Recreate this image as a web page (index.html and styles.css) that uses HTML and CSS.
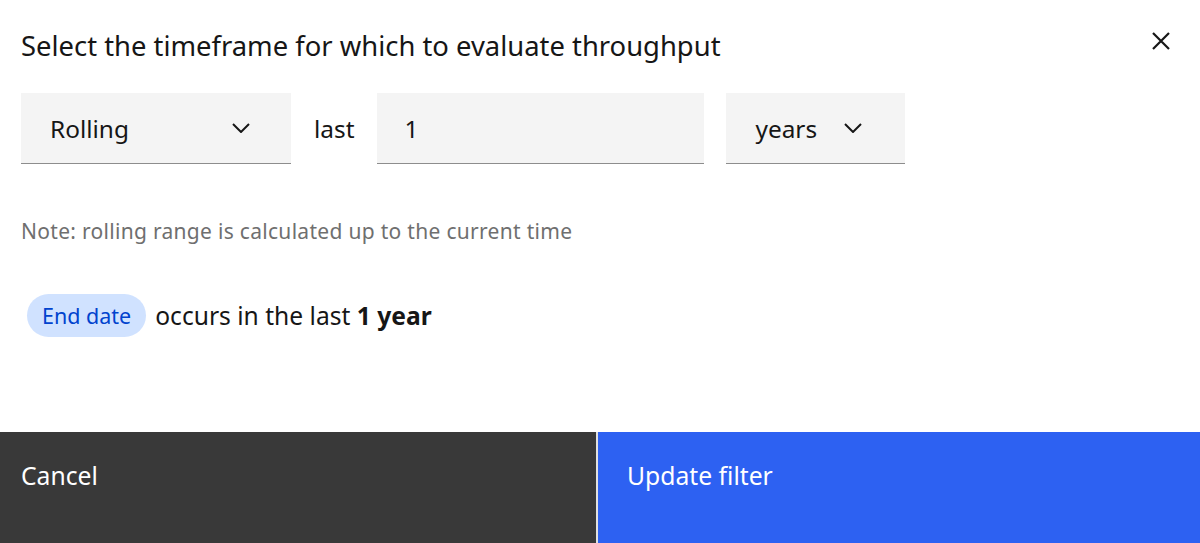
FILE: index.html
```html
<!DOCTYPE html>
<html lang="en">
<head>
<meta charset="utf-8">
<title>Timeframe filter</title>
<link rel="stylesheet" href="styles.css">
</head>
<body>
<div class="modal">
  <div class="modal-header">
    <h2 class="modal-title">Select the timeframe for which to evaluate throughput</h2>
    <button class="close-btn" aria-label="Close">
      <svg width="18" height="18" viewBox="0 0 18 18"><path d="M1 1 L17 17 M17 1 L1 17" stroke="#161616" stroke-width="2.2" fill="none"/></svg>
    </button>
  </div>
  <div class="modal-body">
    <div class="controls">
      <div class="select select-mode">
        <span>Rolling</span>
        <svg class="chev" width="18" height="10" viewBox="0 0 18 10"><path d="M1 1 L9 9 L17 1" stroke="#161616" stroke-width="2" fill="none"/></svg>
      </div>
      <span class="word">last</span>
      <div class="input"><span>1</span></div>
      <div class="select select-unit">
        <span>years</span>
        <svg class="chev" width="18" height="10" viewBox="0 0 18 10"><path d="M1 1 L9 9 L17 1" stroke="#161616" stroke-width="2" fill="none"/></svg>
      </div>
    </div>
    <p class="note">Note: rolling range is calculated up to the current time</p>
    <div class="summary">
      <span class="tag">End date</span>
      <span class="summary-text">occurs in the last <strong>1 year</strong></span>
    </div>
  </div>
  <div class="modal-footer">
    <button class="btn btn-secondary">Cancel</button>
    <button class="btn btn-primary">Update filter</button>
  </div>
</div>
</body>
</html>
```
FILE: styles.css
```css
* { box-sizing: border-box; }
html, body {
  margin: 0;
  padding: 0;
  background: #ffffff;
}
body {
  width: 1200px;
  height: 543px;
  overflow: hidden;
  font-family: "Noto Sans", "Open Sans", sans-serif;
  color: #161616;
}
.modal {
  display: flex;
  flex-direction: column;
  height: 543px;
}
.modal-header {
  display: flex;
  justify-content: space-between;
  align-items: flex-start;
  padding: 26px 24px 0 21px;
}
.modal-title {
  margin: 0;
  font-size: 27.4px;
  font-weight: 400;
  line-height: 40px;
  letter-spacing: 0;
}
.close-btn {
  border: 0;
  background: transparent;
  padding: 0;
  margin-top: 0;
  width: 30px;
  height: 30px;
  display: flex;
  align-items: center;
  justify-content: center;
}
.modal-body {
  flex: 1;
  padding: 27px 21px 0 21px;
}
.controls {
  display: flex;
  align-items: center;
  height: 71px;
}
.select, .input {
  height: 71px;
  background: #f4f4f4;
  border-bottom: 1px solid #8d8d8d;
  display: flex;
  align-items: center;
  font-size: 24.4px;
}
.select-mode {
  width: 270px;
  padding: 0 41px 0 29px;
  justify-content: space-between;
}
.word {
  font-size: 24.4px;
  margin: 0 23px 0 23px;
}
.input {
  width: 327px;
  padding-left: 27px;
}
.select-unit {
  width: 179px;
  margin-left: 22px;
  padding: 0 43px 0 29px;
  justify-content: space-between;
}
.chev { display: block; }
.note {
  margin: 55px 0 0 0;
  font-size: 21px;
  letter-spacing: 0.3px;
  color: #6f6f6f;
  line-height: 24px;
}
.summary {
  display: flex;
  align-items: center;
  margin-top: 51px;
  margin-left: 6px;
}
.tag {
  display: inline-flex;
  align-items: center;
  height: 43px;
  padding: 0 15px;
  border-radius: 22px;
  background: #d0e2ff;
  color: #0043ce;
  font-size: 21.5px;
}
.summary-text {
  margin-left: 9px;
  font-size: 24.6px;
}
.summary-text strong { font-weight: 700; }
.modal-footer {
  display: flex;
  height: 111px;
  gap: 2px;
  background: #e0e0e0;
}
.btn {
  border: 0;
  margin: 0;
  height: 111px;
  text-align: left;
  font-family: inherit;
  font-size: 24.7px;
  color: #ffffff;
  display: flex;
  align-items: flex-start;
  padding-top: 27px;
}
.btn-secondary {
  width: 596px;
  background: #393939;
  padding-left: 21px;
}
.btn-primary {
  flex: 1;
  background: #2d61f2;
  padding-left: 29px;
}
```
